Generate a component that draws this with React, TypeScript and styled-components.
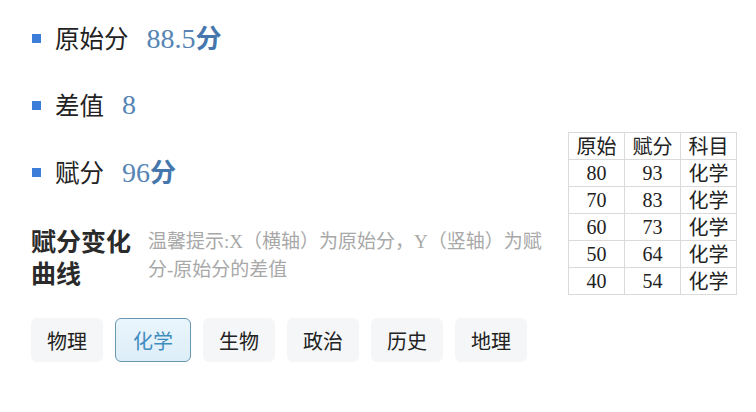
import { FC } from "react";
import styled, { createGlobalStyle } from "styled-components";

const GlobalStyle = createGlobalStyle`
	body {
		margin: 0;
		background: #fff;
		font-family: "Noto Sans CJK SC", "Noto Sans", sans-serif;
		color: #222;
	}
`;

const Page = styled.div`
	display: flex;
	align-items: flex-start;
	padding: 20px 0 0 31px;
`;

const LeftColumn = styled.div`
	width: 517px;
	display: flex;
	flex-direction: column;
`;

const StatList = styled.div`
	display: flex;
	flex-direction: column;
	gap: 31px;
`;

const StatRow = styled.div`
	display: flex;
	align-items: center;
	height: 36px;
`;

const Bullet = styled.span`
	width: 9px;
	height: 9px;
	background-color: #3b7dd8;
	margin: 0 14px 0 1px;
	flex-shrink: 0;
`;

const StatLabel = styled.span`
	font-size: 24.5px;
	line-height: 36px;
	color: #222;
`;

const StatValue = styled.span`
	margin-left: 18px;
	font-family: "Liberation Serif", "Noto Sans CJK SC", serif;
	font-size: 28px;
	line-height: 36px;
	color: #5584b4;
`;

const Unit = styled.b`
	font-family: "Noto Sans CJK SC", sans-serif;
	font-size: 26px;
	font-weight: 700;
	color: #4577ad;
`;

const CurveSection = styled.div`
	display: flex;
	margin-top: 34px;
`;

const CurveTitle = styled.div`
	width: 104px;
	flex-shrink: 0;
	font-size: 25px;
	font-weight: 700;
	line-height: 32px;
	color: #2a2a2a;
`;

const CurveHint = styled.div`
	margin: 4px 0 0 13px;
	font-family: "Liberation Serif", "Noto Sans CJK SC", serif;
	font-size: 19px;
	line-height: 28px;
	color: #a8a8a8;
`;

const SubjectTabs = styled.div`
	display: flex;
	gap: 12px;
	margin-top: 30px;
`;

const SubjectTab = styled.button<{ $active?: boolean }>`
	height: 44px;
	padding: 0 ${props => (props.$active ? "17px" : "15px")};
	border: 1px solid ${props => (props.$active ? "#6a97b0" : "transparent")};
	border-radius: 6px;
	background: ${props =>
		props.$active
			? "linear-gradient(180deg, #eaf5fc 0%, #ddeef8 100%)"
			: "#f4f6f7"};
	font-family: "Noto Sans CJK SC", sans-serif;
	font-size: 20px;
	color: ${props => (props.$active ? "#3f8dbf" : "#222")};
	cursor: pointer;
	outline: none;
`;

const ScoreTable = styled.table`
	margin: 112px 0 0 20px;
	border-collapse: collapse;
	font-family: "Liberation Serif", "Noto Sans CJK SC", serif;
	font-size: 20px;
	color: #222;
`;

const Cell = styled.td`
	width: 55px;
	height: 26px;
	padding: 0;
	border: 1px solid #dadada;
	text-align: center;
	line-height: 26px;
`;

const HeadCell = styled(Cell).attrs({ as: "th" })`
	font-family: "Noto Sans CJK SC", sans-serif;
	font-weight: 400;
`;

const SubjectCell = styled(Cell)`
	font-family: "Noto Sans CJK SC", sans-serif;
`;

const stats = [
	{ label: "原始分", value: "88.5", unit: "分" },
	{ label: "差值", value: "8" },
	{ label: "赋分", value: "96", unit: "分" }
];

const subjects = ["物理", "化学", "生物", "政治", "历史", "地理"];

const rows = [
	[80, 93],
	[70, 83],
	[60, 73],
	[50, 64],
	[40, 54]
];

const App: FC = () => {
	const current = "化学";

	return (
		<>
			<GlobalStyle />
			<Page>
				<LeftColumn>
					<StatList>
						{stats.map(stat => (
							<StatRow key={stat.label}>
								<Bullet />
								<StatLabel>{stat.label}</StatLabel>
								<StatValue>
									{stat.value}
									{stat.unit && <Unit>{stat.unit}</Unit>}
								</StatValue>
							</StatRow>
						))}
					</StatList>

					<CurveSection>
						<CurveTitle>赋分变化曲线</CurveTitle>
						<CurveHint>
							温馨提示:X（横轴）为原始分，Y（竖轴）为赋分-原始分的差值
						</CurveHint>
					</CurveSection>

					<SubjectTabs>
						{subjects.map(name => (
							<SubjectTab key={name} $active={name === current}>
								{name}
							</SubjectTab>
						))}
					</SubjectTabs>
				</LeftColumn>

				<ScoreTable>
					<thead>
						<tr>
							<HeadCell>原始</HeadCell>
							<HeadCell>赋分</HeadCell>
							<HeadCell>科目</HeadCell>
						</tr>
					</thead>
					<tbody>
						{rows.map(([raw, scaled]) => (
							<tr key={raw}>
								<Cell>{raw}</Cell>
								<Cell>{scaled}</Cell>
								<SubjectCell>{current}</SubjectCell>
							</tr>
						))}
					</tbody>
				</ScoreTable>
			</Page>
		</>
	);
};

export default App;
